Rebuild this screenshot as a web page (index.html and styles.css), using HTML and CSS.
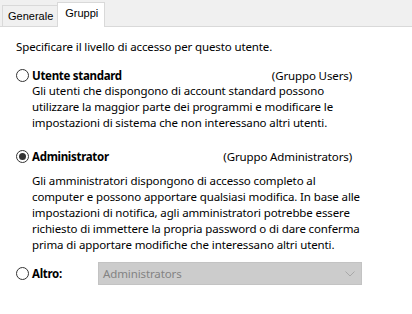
FILE: index.html
```html
<!DOCTYPE html>
<html lang="it">
<head>
<meta charset="utf-8">
<link rel="stylesheet" href="styles.css">
</head>
<body>
<div class="tabstrip">
  <div class="tab">Generale</div>
  <div class="tab tab-active">Gruppi</div>
</div>
<div class="content">
  <p class="intro">Specificare il livello di accesso per questo utente.</p>

  <div class="option option-first">
    <div class="option-head">
      <span class="radio"></span>
      <span class="label">Utente standard</span>
      <span class="group">(Gruppo Users)</span>
    </div>
    <p class="desc">Gli utenti che dispongono di account standard possono<br>utilizzare la maggior parte dei programmi e modificare le<br>impostazioni di sistema che non interessano altri utenti.</p>
  </div>

  <div class="option option-second">
    <div class="option-head">
      <span class="radio radio-checked"></span>
      <span class="label">Administrator</span>
      <span class="group">(Gruppo Administrators)</span>
    </div>
    <p class="desc desc-admin">Gli amministratori dispongono di accesso completo al<br>computer e possono apportare qualsiasi modifica. In base alle<br>impostazioni di notifica, agli amministratori potrebbe essere<br>richiesto di immettere la propria password o di dare conferma<br>prima di apportare modifiche che interessano altri utenti.</p>
  </div>

  <div class="other-row">
    <div class="other-label">
      <span class="radio"></span>
      <span class="label">Altro:</span>
    </div>
    <div class="combo">
      <span class="combo-text">Administrators</span>
      <svg class="chevron" width="10" height="6" viewBox="0 0 10 6"><path d="M0.5 0.5 L5 5 L9.5 0.5" fill="none" stroke="#a8a8a8" stroke-width="1"/></svg>
    </div>
  </div>
</div>
</body>
</html>
```

FILE: styles.css
```css
html, body {
  margin: 0;
  padding: 0;
  background: #ffffff;
}
body {
  font-family: "Noto Sans", "Open Sans", sans-serif;
  font-size: 11.5px;
  letter-spacing: -0.12px;
  color: #000000;
  width: 412px;
  height: 314px;
  overflow: hidden;
}
.tabstrip {
  display: flex;
  align-items: flex-end;
  height: 26px;
  background: #f0f0f0;
  border-bottom: 1px solid #d9d9d9;
  padding-left: 2px;
}
.tab {
  font-family: "Liberation Sans", Arial, sans-serif;
  font-size: 11px;
  letter-spacing: 0;
  height: 21px;
  line-height: 21px;
  padding: 0 4px 0 5px;
  background: #f0f0f0;
  border: 1px solid #d9d9d9;
  border-bottom: none;
  box-sizing: border-box;
}
.tab-active {
  background: #ffffff;
  height: 25px;
  line-height: 21px;
  margin-bottom: -1px;
  padding: 0 6px 4px 7px;
  margin-left: -1px;
}
.content {
  padding: 12px 0 0 16px;
}
.intro {
  margin: 0;
  line-height: 16px;
}
.option {
  width: 336px;
}
.option-first {
  margin-top: 12px;
}
.option-second {
  margin-top: 17px;
}
.option-head {
  display: flex;
  align-items: center;
  height: 16px;
}
.radio {
  width: 13px;
  height: 13px;
  box-sizing: border-box;
  border: 1px solid #333333;
  border-radius: 50%;
  background: #ffffff;
  display: inline-flex;
  align-items: center;
  justify-content: center;
  flex: none;
  margin-right: 3px;
}
.radio-checked::after {
  content: "";
  width: 7px;
  height: 7px;
  border-radius: 50%;
  background: #333333;
}
.label {
  font-weight: bold;
  letter-spacing: -0.3px;
}
.group {
  margin-left: auto;
}
.desc {
  margin: 0 0 0 16px;
  line-height: 16px;
  white-space: nowrap;
}
.desc-admin {
  margin-top: 9px;
}
.other-row {
  display: flex;
  align-items: center;
  margin-top: 9px;
}
.other-label {
  display: flex;
  align-items: center;
  width: 82px;
}
.combo {
  width: 264px;
  height: 23px;
  box-sizing: border-box;
  background: #cccccc;
  border: 1px solid #c3c3c3;
  display: flex;
  align-items: center;
  justify-content: space-between;
  padding: 0 6px 0 4px;
}
.combo-text {
  color: #838383;
}
.chevron {
  display: block;
}
```
